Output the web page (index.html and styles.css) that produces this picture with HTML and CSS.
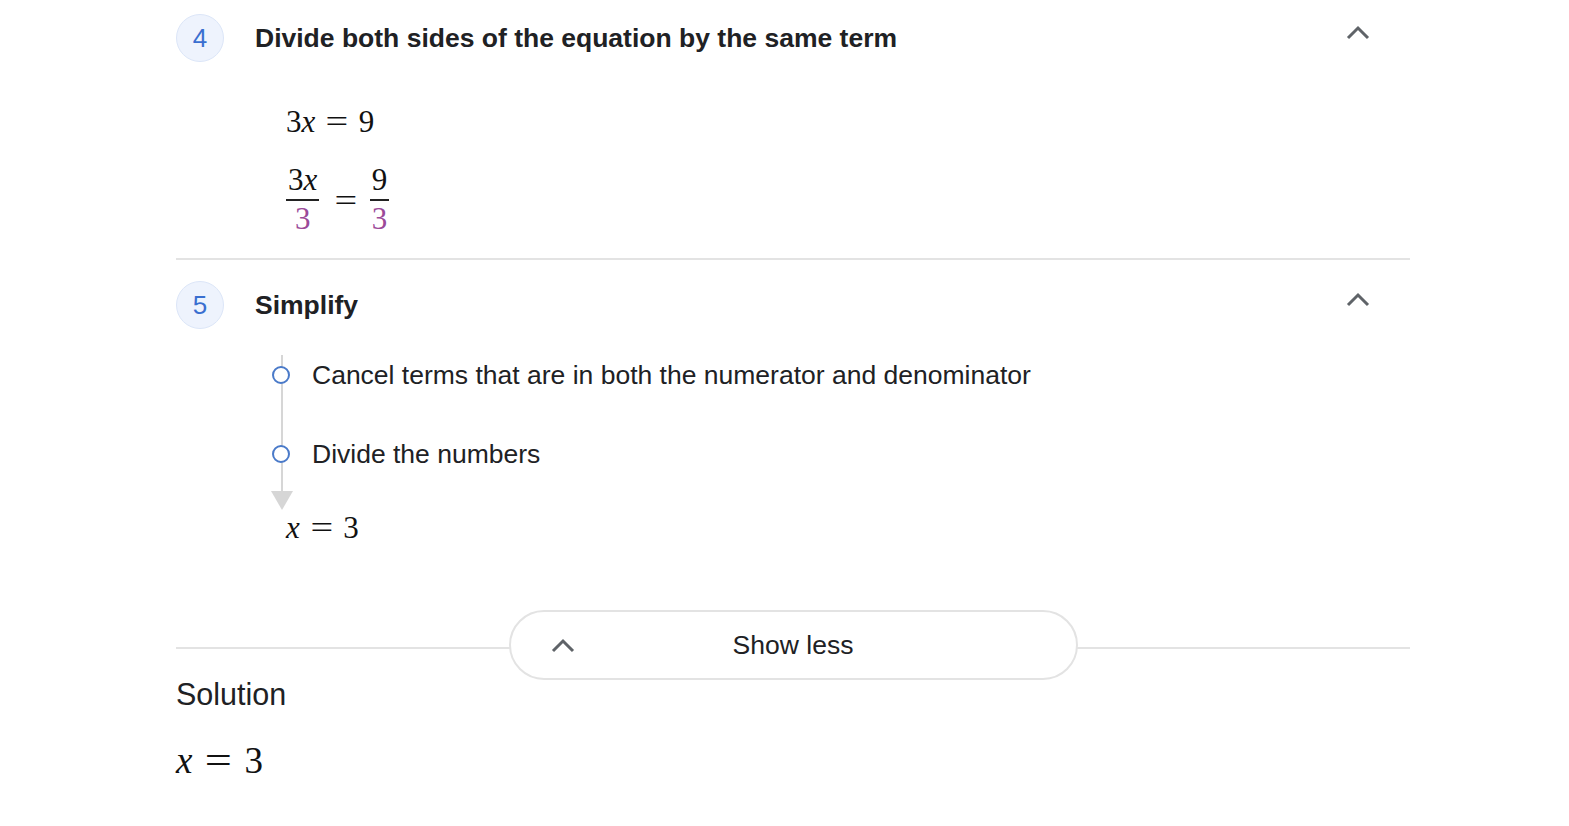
FILE: index.html
```html
<!DOCTYPE html>
<html>
<head>
<meta charset="utf-8">
<link rel="stylesheet" href="styles.css">
</head>
<body>
<div class="page">
  <section class="step step4">
    <div class="step-head">
      <div class="num">4</div>
      <div class="title">Divide both sides of the equation by the same term</div>
      <svg class="chev" width="24" height="16" viewBox="0 0 24 16"><path d="M2 13 L12 3 L22 13" fill="none" stroke="#5f6368" stroke-width="3"/></svg>
    </div>
    <div class="math-block">
      <div class="math m1">3<i>x</i><span class="op">=</span>9</div>
      <div class="math frac-row">
        <span class="frac"><span class="fn">3<i>x</i></span><span class="fd">3</span></span>
        <span class="eq">=</span>
        <span class="frac"><span class="fn">9</span><span class="fd">3</span></span>
      </div>
    </div>
  </section>
  <section class="step step5">
    <div class="step-head">
      <div class="num">5</div>
      <div class="title">Simplify</div>
      <svg class="chev" width="24" height="16" viewBox="0 0 24 16"><path d="M2 13 L12 3 L22 13" fill="none" stroke="#5f6368" stroke-width="3"/></svg>
    </div>
    <div class="substeps">
      <div class="rail"><div class="line"></div><div class="arrow"></div></div>
      <div class="sub s1"><span class="dot"></span><span>Cancel terms that are in both the numerator and denominator</span></div>
      <div class="sub s2"><span class="dot"></span><span>Divide the numbers</span></div>
      <div class="math res"><i>x</i><span class="op">=</span>3</div>
    </div>
  </section>
  <div class="show-row">
    <div class="show-btn">
      <svg class="chev-s" width="24" height="16" viewBox="0 0 24 16"><path d="M2 13 L12 3 L22 13" fill="none" stroke="#5f6368" stroke-width="3"/></svg>
      <span>Show less</span>
    </div>
  </div>
  <div class="solution">
    <div class="sol-label">Solution</div>
    <div class="math sol"><i>x</i><span class="op">=</span>3</div>
  </div>
</div>
</body>
</html>
```
FILE: styles.css
```css
html, body { margin: 0; padding: 0; background: #fff; }
body { font-family: "Liberation Sans", Arial, sans-serif; color: #202124; }
.page { width: 1234px; margin-left: 176px; }
.step-head { display: flex; align-items: center; height: 48px; }
.step4 .step-head { margin-top: 14px; }
.num { width: 46px; height: 46px; border-radius: 50%; background: #eef3fd; border: 1px solid #dce6f8; color: #3a6fd0; font-size: 26px; display: flex; align-items: center; justify-content: center; flex-shrink: 0; }
.title { font-weight: bold; font-size: 26.5px; margin-left: 31px; flex: 1; }
.chev { margin-right: 40px; margin-top: -10px; }
.math { font-family: "Liberation Serif", "Times New Roman", serif; font-size: 31px; color: #111; }
.math i { font-style: italic; }
.op { display: inline-block; margin: 0 0.42em; transform: scaleX(1.3); }
.math-block { padding-left: 110px; padding-top: 40px; padding-bottom: 21px; border-bottom: 2px solid #e3e3e3; }
.m1 { line-height: 40px; }
.frac-row { display: flex; align-items: center; margin-top: 19px; height: 76px; }
.frac { display: inline-flex; flex-direction: column; align-items: center; line-height: 35px; }
.fn { border-bottom: 2px solid #222; padding: 0 2px 2px; }
.fd { color: #9b4a99; padding-top: 0; }
.eq { display: inline-block; margin: 0 15px 0 18px; padding-top: 4px; transform: scaleX(1.3); }
.step5 .step-head { margin-top: 21px; }
.substeps { position: relative; padding-left: 110px; margin-top: 24px; }
.rail { position: absolute; left: 100px; top: 2px; width: 12px; }
.line { width: 2px; height: 136px; background: #d6d6d6; margin-left: 5px; }
.arrow { width: 0; height: 0; border-left: 11px solid transparent; border-right: 11px solid transparent; border-top: 19px solid #d6d6d6; margin-left: -5px; }
.sub { display: flex; align-items: center; font-size: 26.5px; height: 44px; margin-left: -14px; }
.s1 { margin-top: 4px; }
.s2 { margin-top: 35px; }
.dot { width: 14px; height: 14px; border: 2px solid #4a7ac9; border-radius: 50%; background: #fff; margin-right: 22px; position: relative; z-index: 1; }
.res { margin-top: 32px; line-height: 40px; }
.show-row { position: relative; height: 70px; margin-top: 62px; display: flex; justify-content: center; }
.show-row::before { content: ""; position: absolute; left: 0; right: 0; top: 37px; height: 2px; background: #e3e3e3; }
.show-btn { position: relative; width: 569px; height: 70px; box-sizing: border-box; border: 2px solid #e3e3e3; border-radius: 36px; background: #fff; display: flex; align-items: center; justify-content: center; font-size: 26.5px; }
.chev-s { position: absolute; left: 40px; top: 26px; }
.sol-label { font-size: 30.5px; margin-top: -3px; line-height: 34px; }
.sol { font-size: 37px; margin-top: 30px; line-height: 40px; }
```
